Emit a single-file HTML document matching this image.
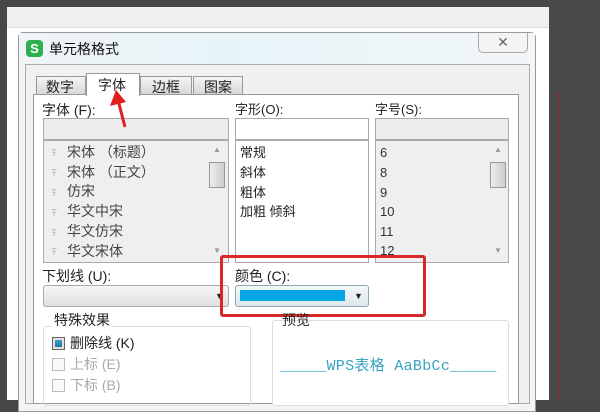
<!DOCTYPE html>
<html><head><meta charset="utf-8"><style>
*{margin:0;padding:0;box-sizing:border-box}
body{width:600px;height:400px;overflow:hidden;background:#474747;position:relative;font-family:"Liberation Sans","Noto Sans CJK SC",sans-serif;font-size:13px;color:#222}
.a{position:absolute}
.t{position:absolute;white-space:nowrap;line-height:1}
.box{position:absolute;border:1px solid #a9a9a9}
.ck{position:absolute;width:13px;height:13px;border:1px solid #bbb;background:#fafafa}
.li{position:absolute;left:67px;color:#444;font-size:14px;line-height:1;white-space:nowrap}
.tt{position:absolute;left:51px;color:#bbb;font-size:10px}
</style></head><body>
<div class="a" style="left:7px;top:7px;width:542px;height:393px;background:#fff"></div>
<div class="a" style="left:7px;top:7px;width:542px;height:21px;background:#f0f0f0;border-bottom:1px solid #ddd"></div>
<div class="a" style="left:549px;top:0;width:51px;height:400px;background:#4a4a4a"></div>
<div class="a" style="left:558px;top:92px;width:2px;height:308px;background:#6a3a3a"></div>
<div class="a" style="left:18px;top:32px;width:518px;height:380px;background:#f4f4f4;border:1px solid #999;border-radius:5px 5px 0 0"></div>
<div class="a" style="left:19px;top:33px;width:516px;height:31px;background:linear-gradient(90deg,#f0f4f6,#e6f4f8 40%,#f2f6f8)"></div>
<div class="a" style="left:26px;top:40px;width:17px;height:17px;background:#2cb050;border-radius:4px;color:#fff;font-size:13px;font-weight:bold;text-align:center;line-height:17px">S</div>
<div class="t" style="left:49px;top:42px;font-size:14px;color:#111">单元格格式</div>
<div class="a" style="left:478px;top:33px;width:50px;height:20px;border:1px solid #aaa;border-top:none;border-radius:0 0 5px 5px;background:#f4f4f4;text-align:center;font-size:14px;color:#666;line-height:18px">✕</div>
<div class="a" style="left:25px;top:64px;width:505px;height:340px;border:1px solid #aaa;background:#f0f0f0"></div>
<div class="a" style="left:36px;top:76px;width:50px;height:19px;border:1px solid #999;background:linear-gradient(#f4f4f4,#d8d8d8)"></div>
<div class="t" style="left:46px;top:80px;font-size:14px">数字</div>
<div class="a" style="left:140px;top:76px;width:52px;height:19px;border:1px solid #999;background:linear-gradient(#f4f4f4,#d8d8d8)"></div>
<div class="t" style="left:152px;top:80px;font-size:14px">边框</div>
<div class="a" style="left:193px;top:76px;width:50px;height:19px;border:1px solid #999;background:linear-gradient(#f4f4f4,#d8d8d8)"></div>
<div class="t" style="left:204px;top:80px;font-size:14px">图案</div>
<div class="a" style="left:33px;top:94px;width:486px;height:310px;background:#fff;border:1px solid #999"></div>
<div class="a" style="left:86px;top:73px;width:54px;height:23px;border:1px solid #999;border-bottom:none;background:#fff"></div>
<div class="t" style="left:98px;top:78px;font-size:14px">字体</div>
<div class="t" style="left:42px;top:103px;font-size:14px">字体 (F):</div>
<div class="t" style="left:235px;top:103px">字形(O):</div>
<div class="t" style="left:375px;top:103px">字号(S):</div>
<div class="box" style="left:43px;top:118px;width:186px;height:22px;background:#ececec"></div>
<div class="box" style="left:235px;top:118px;width:134px;height:22px;background:#fff"></div>
<div class="box" style="left:375px;top:118px;width:134px;height:22px;background:#ececec"></div>
<div class="box" style="left:43px;top:140px;width:186px;height:123px;background:#efefef"></div>
<div class="box" style="left:235px;top:140px;width:134px;height:123px;background:#fff"></div>
<div class="box" style="left:375px;top:140px;width:134px;height:123px;background:#efefef"></div>
<div class="a" style="left:209px;top:162px;width:16px;height:26px;border:1px solid #999;background:linear-gradient(90deg,#eee,#ccc)"></div>
<div class="t" style="left:213px;top:146px;font-size:8px;color:#999">▲</div>
<div class="t" style="left:213px;top:247px;font-size:8px;color:#999">▼</div>
<div class="a" style="left:490px;top:162px;width:16px;height:26px;border:1px solid #999;background:linear-gradient(90deg,#eee,#ccc)"></div>
<div class="t" style="left:494px;top:146px;font-size:8px;color:#999">▲</div>
<div class="t" style="left:494px;top:247px;font-size:8px;color:#999">▼</div>
<div class="tt" style="top:148px">Ŧ</div><div class="li" style="top:145px">宋体 （标题）</div>
<div class="tt" style="top:168px">Ŧ</div><div class="li" style="top:165px">宋体 （正文）</div>
<div class="tt" style="top:188px">Ŧ</div><div class="li" style="top:184px">仿宋</div>
<div class="tt" style="top:208px">Ŧ</div><div class="li" style="top:204px">华文中宋</div>
<div class="tt" style="top:228px">Ŧ</div><div class="li" style="top:224px">华文仿宋</div>
<div class="tt" style="top:247px">Ŧ</div><div class="li" style="top:244px">华文宋体</div>
<div class="t" style="left:240px;top:146px">常规</div>
<div class="t" style="left:240px;top:166px">斜体</div>
<div class="t" style="left:240px;top:186px">粗体</div>
<div class="t" style="left:240px;top:205px">加粗 倾斜</div>
<div class="t" style="left:380px;top:146px;color:#333">6</div>
<div class="t" style="left:380px;top:166px;color:#333">8</div>
<div class="t" style="left:380px;top:186px;color:#333">9</div>
<div class="t" style="left:380px;top:205px;color:#333">10</div>
<div class="t" style="left:380px;top:225px;color:#333">11</div>
<div class="t" style="left:380px;top:244px;color:#333">12</div>
<div class="t" style="left:42px;top:269px;font-size:14px">下划线 (U):</div>
<div class="box" style="left:43px;top:285px;width:186px;height:22px;border-radius:3px;background:linear-gradient(#f6f6f6,#e0e0e0)"></div>
<div class="t" style="left:215px;top:292px;font-size:9px">▼</div>
<div class="t" style="left:235px;top:269px;font-size:14px">颜色 (C):</div>
<div class="box" style="left:235px;top:285px;width:134px;height:22px;border-radius:3px;background:linear-gradient(#f4f8fa,#dde8ee);border-color:#8aa"></div>
<div class="a" style="left:240px;top:290px;width:105px;height:11px;background:#03a6e4"></div>
<div class="t" style="left:354px;top:292px;font-size:9px">▼</div>
<div class="a" style="left:220px;top:255px;width:206px;height:62px;border:3px solid #d8282a;border-radius:3px"></div>
<div class="a" style="left:43px;top:326px;width:208px;height:80px;border:1px solid #ddd;border-radius:3px"></div>
<div class="a" style="left:52px;top:318px;width:60px;height:14px;background:#fff"></div>
<div class="t" style="left:54px;top:313px;font-size:14px">特殊效果</div>
<div class="ck" style="left:52px;top:337px;border-color:#666;background:linear-gradient(#4aa8d8,#1a6e9a);box-shadow:inset 0 0 0 2px #e0e0e0"></div>
<div class="t" style="left:70px;top:336px;font-size:14px">删除线 (K)</div>
<div class="ck" style="left:52px;top:358px"></div>
<div class="t" style="left:70px;top:357px;color:#aaa;font-size:14px">上标 (E)</div>
<div class="ck" style="left:52px;top:379px"></div>
<div class="t" style="left:70px;top:378px;color:#aaa;font-size:14px">下标 (B)</div>
<div class="a" style="left:272px;top:320px;width:237px;height:86px;border:1px solid #ddd;border-radius:3px;background:#fff"></div>
<div class="t" style="left:282px;top:313px;font-size:14px">预览</div>
<div class="t" style="left:280px;top:359px;color:#3aa3c2;font-family:'Liberation Mono','Noto Sans CJK SC',monospace;font-size:15px;letter-spacing:0.3px">_____WPS表格  AaBbCc_____</div>
<svg class="a" style="left:100px;top:80px" width="40" height="55"><line x1="25" y1="47" x2="18" y2="20" stroke="#e02020" stroke-width="3"/><polygon points="16,10 10,26 26,22" fill="#e02020"/></svg>
</body></html>
